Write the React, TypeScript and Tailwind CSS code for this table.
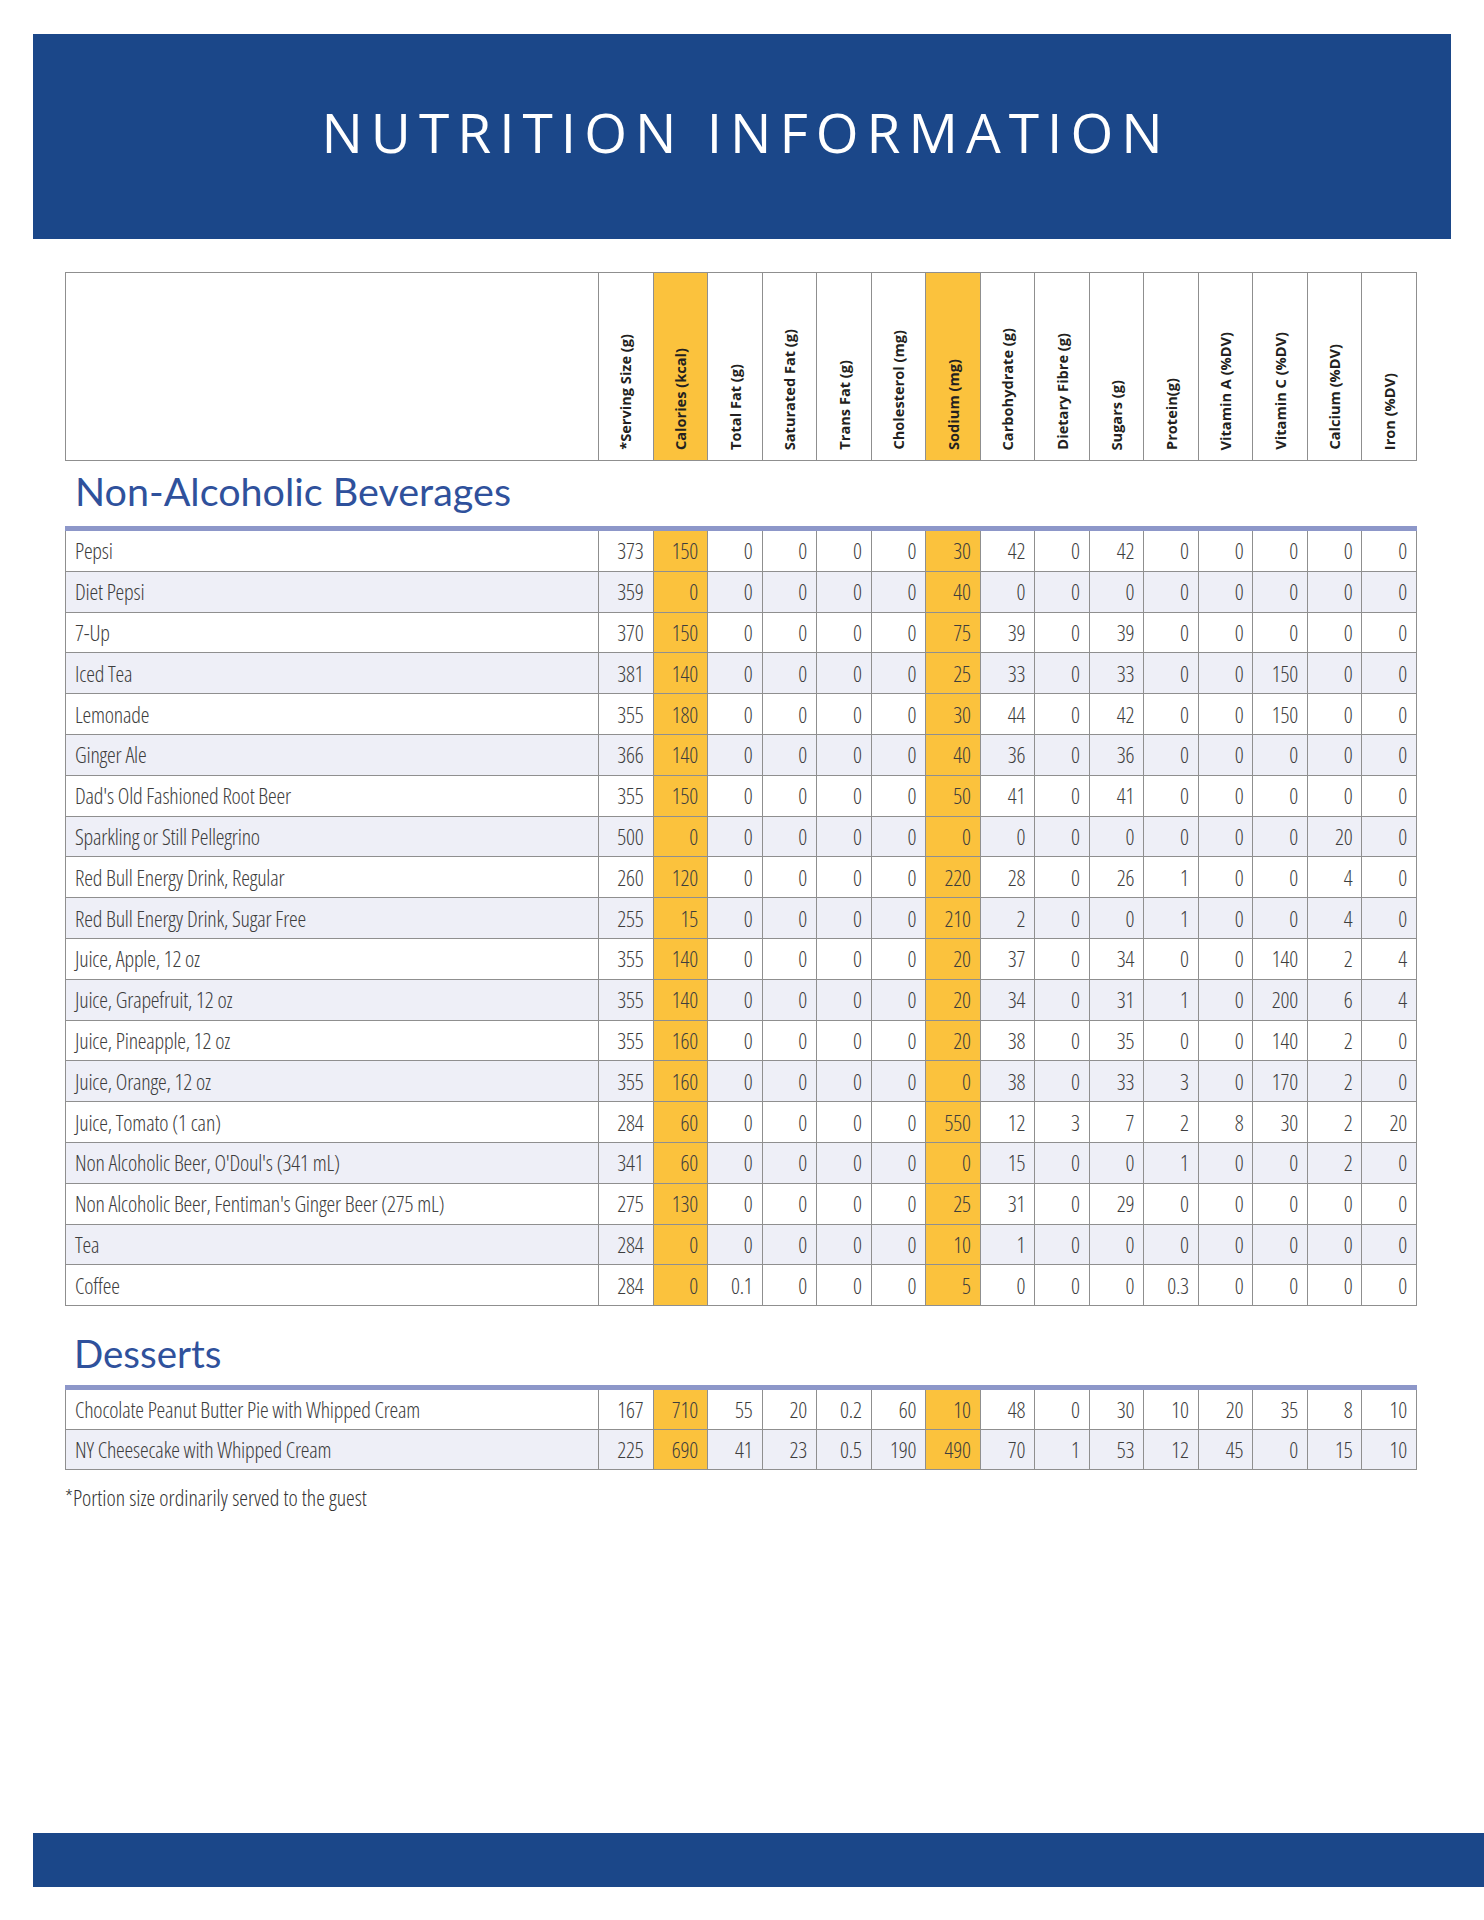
import React from 'react';

type Row = { name: string; values: (string | number)[] };

const columns = [
  '*Serving Size (g)',
  'Calories (kcal)',
  'Total Fat (g)',
  'Saturated Fat (g)',
  'Trans Fat (g)',
  'Cholesterol (mg)',
  'Sodium (mg)',
  'Carbohydrate (g)',
  'Dietary Fibre (g)',
  'Sugars (g)',
  'Protein(g)',
  'Vitamin A (%DV)',
  'Vitamin C (%DV)',
  'Calcium (%DV)',
  'Iron (%DV)',
];

// calories + sodium get the yellow highlight
const highlighted = [1, 6];

const beverages: Row[] = [
  { name: 'Pepsi', values: [373, 150, 0, 0, 0, 0, 30, 42, 0, 42, 0, 0, 0, 0, 0] },
  { name: 'Diet Pepsi', values: [359, 0, 0, 0, 0, 0, 40, 0, 0, 0, 0, 0, 0, 0, 0] },
  { name: '7-Up', values: [370, 150, 0, 0, 0, 0, 75, 39, 0, 39, 0, 0, 0, 0, 0] },
  { name: 'Iced Tea', values: [381, 140, 0, 0, 0, 0, 25, 33, 0, 33, 0, 0, 150, 0, 0] },
  { name: 'Lemonade', values: [355, 180, 0, 0, 0, 0, 30, 44, 0, 42, 0, 0, 150, 0, 0] },
  { name: 'Ginger Ale', values: [366, 140, 0, 0, 0, 0, 40, 36, 0, 36, 0, 0, 0, 0, 0] },
  { name: "Dad's Old Fashioned Root Beer", values: [355, 150, 0, 0, 0, 0, 50, 41, 0, 41, 0, 0, 0, 0, 0] },
  { name: 'Sparkling or Still Pellegrino', values: [500, 0, 0, 0, 0, 0, 0, 0, 0, 0, 0, 0, 0, 20, 0] },
  { name: 'Red Bull Energy Drink, Regular', values: [260, 120, 0, 0, 0, 0, 220, 28, 0, 26, 1, 0, 0, 4, 0] },
  { name: 'Red Bull Energy Drink, Sugar Free', values: [255, 15, 0, 0, 0, 0, 210, 2, 0, 0, 1, 0, 0, 4, 0] },
  { name: 'Juice, Apple, 12 oz', values: [355, 140, 0, 0, 0, 0, 20, 37, 0, 34, 0, 0, 140, 2, 4] },
  { name: 'Juice, Grapefruit, 12 oz', values: [355, 140, 0, 0, 0, 0, 20, 34, 0, 31, 1, 0, 200, 6, 4] },
  { name: 'Juice, Pineapple, 12 oz', values: [355, 160, 0, 0, 0, 0, 20, 38, 0, 35, 0, 0, 140, 2, 0] },
  { name: 'Juice, Orange, 12 oz', values: [355, 160, 0, 0, 0, 0, 0, 38, 0, 33, 3, 0, 170, 2, 0] },
  { name: 'Juice, Tomato (1 can)', values: [284, 60, 0, 0, 0, 0, 550, 12, 3, 7, 2, 8, 30, 2, 20] },
  { name: "Non Alcoholic Beer, O'Doul's (341 mL)", values: [341, 60, 0, 0, 0, 0, 0, 15, 0, 0, 1, 0, 0, 2, 0] },
  { name: "Non Alcoholic Beer, Fentiman's Ginger Beer (275 mL)", values: [275, 130, 0, 0, 0, 0, 25, 31, 0, 29, 0, 0, 0, 0, 0] },
  { name: 'Tea', values: [284, 0, 0, 0, 0, 0, 10, 1, 0, 0, 0, 0, 0, 0, 0] },
  { name: 'Coffee', values: [284, 0, '0.1', 0, 0, 0, 5, 0, 0, 0, '0.3', 0, 0, 0, 0] },
];

const desserts: Row[] = [
  { name: 'Chocolate Peanut Butter Pie with Whipped Cream', values: [167, 710, 55, 20, '0.2', 60, 10, 48, 0, 30, 10, 20, 35, 8, 10] },
  { name: 'NY Cheesecake with Whipped Cream', values: [225, 690, 41, 23, '0.5', 190, 490, 70, 1, 53, 12, 45, 0, 15, 10] },
];

const gridCols = 'grid grid-cols-[533px_repeat(15,minmax(0,1fr))]';

function HeaderRow() {
  return (
    <div className={`${gridCols} border-t border-l border-[#8f8f8f]`}>
      <div className="h-[188px] border-r border-b border-[#8f8f8f]" />
      {columns.map((label, i) => (
        <div
          key={label}
          className={`h-[188px] border-r border-b border-[#8f8f8f] flex items-end justify-center pb-[10px] ${
            highlighted.includes(i) ? 'bg-[#fbc23d]' : 'bg-white'
          }`}
        >
          <span className="[writing-mode:vertical-rl] rotate-180 whitespace-nowrap font-['Open_Sans',sans-serif] [font-stretch:100%] font-bold text-[14.6px] leading-none tracking-normal text-[#231f20]">
            {label}
          </span>
        </div>
      ))}
    </div>
  );
}

function DataRows({ rows, rowHeight }: { rows: Row[]; rowHeight: string }) {
  return (
    <div className="border-t-[5px] border-[#8d97c9]">
      {rows.map((row, r) => (
        <div
          key={row.name}
          className={`${gridCols} ${rowHeight} border-l border-[#8f8f8f] ${r % 2 === 1 ? 'bg-[#eeeff7]' : 'bg-white'}`}
        >
          <div className="border-r border-b border-[#8f8f8f] flex items-center pl-[9px] whitespace-nowrap">
            {row.name}
          </div>
          {row.values.map((v, i) => (
            <div
              key={i}
              className={`border-r border-b border-[#8f8f8f] flex items-center justify-end pr-[9px] ${
                highlighted.includes(i) ? 'bg-[#fbc23d]' : ''
              }`}
            >
              {v}
            </div>
          ))}
        </div>
      ))}
    </div>
  );
}

export default function App() {
  return (
    <div className="w-[1484px] h-[1920px] bg-white flex flex-col">
      {/* Title band */}
      <div className="mt-[34px] mx-[33px] h-[205px] bg-[#1b4789] flex items-center justify-center pb-[10px]">
        <h1 className="font-['Open_Sans',sans-serif] font-normal text-[55px] leading-none tracking-[8px] pl-[8px] text-white">
          NUTRITION INFORMATION
        </h1>
      </div>

      {/* Table */}
      <div className="ml-[65px] w-[1352px] mt-[33px] font-['Open_Sans',sans-serif] [font-stretch:75%] font-light text-[22px] tracking-[-0.2px] text-[#3d3d3d]">
        <HeaderRow />

        <div className="h-[65px] flex items-end pb-[16px] pl-[10px]">
          <h2 className="font-['Lato',sans-serif] [font-stretch:100%] font-normal text-[39.5px] leading-none tracking-normal text-[#2f519c]">
            Non-Alcoholic Beverages
          </h2>
        </div>
        <DataRows rows={beverages} rowHeight="h-[40.8px]" />

        <div className="h-[79px] flex items-end pb-[13px] pl-[9px]">
          <h2 className="font-['Lato',sans-serif] [font-stretch:100%] font-normal text-[38.5px] leading-none tracking-normal text-[#2f519c]">
            Desserts
          </h2>
        </div>
        <DataRows rows={desserts} rowHeight="h-[40px]" />

        <p className="mt-[14px] text-[22px] leading-[26px] tracking-normal text-[#333]">
          *Portion size ordinarily served to the guest
        </p>
      </div>

      {/* Bottom band */}
      <div className="mt-auto mb-[33px] ml-[33px] h-[54px] bg-[#1b4789]" />
    </div>
  );
}
